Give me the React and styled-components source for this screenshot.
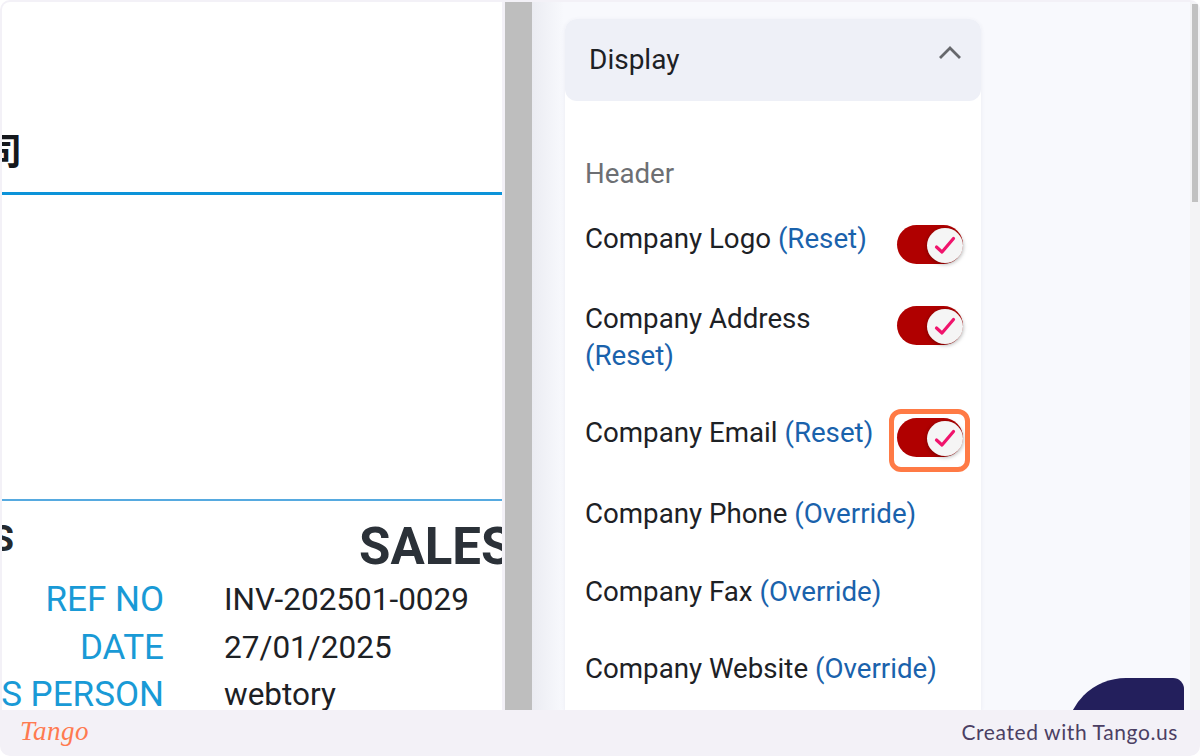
import React from 'react'
import styled, { createGlobalStyle } from 'styled-components'

const Global = createGlobalStyle`
  html, body { margin: 0; padding: 0; background: #fff; }
  body { font-family: Roboto, "Noto Sans", sans-serif; }
`

const Shot = styled.div`
  width: 1200px;
  height: 756px;
  background: #f3f1f7;
  border-radius: 10px;
  overflow: hidden;
  display: flex;
  flex-direction: column;
`

const Viewport = styled.div`
  height: 708px;
  margin: 2px 0 0 2px;
  display: flex;
  overflow: hidden;
  border-radius: 8px 8px 0 0;
`

const DocPane = styled.div`
  width: 500px;
  flex: none;
  background: #fff;
  overflow: hidden;
`

const Doc = styled.div`
  width: 1200px;
  margin-left: -300px;
`

const CompanyName = styled.h1`
  margin: 0;
  height: 190px;
  box-sizing: border-box;
  padding-top: 125px;
  width: 320px;
  text-align: right;
  white-space: nowrap;
  font-family: "Noto Sans CJK SC", sans-serif;
  font-size: 37px;
  line-height: 44px;
  font-weight: 700;
  color: #15181c;
`

const Rule = styled.div`
  width: 800px;
  height: ${p => p.$thick ? 3 : 2}px;
  background: ${p => p.$thick ? '#0c93d9' : '#56aae0'};
  margin-bottom: ${p => p.$space || 0}px;
`

const TitleRow = styled.div`
  height: 75px;
  display: flex;
  align-items: flex-start;
  white-space: nowrap;
`

const Address = styled.div`
  flex: none;
  font-size: 36px;
  line-height: 42px;
  font-weight: 700;
  color: #24292e;
  margin-top: 17px;
  width: 312px;
  text-align: right;
`

const InvoiceTitle = styled.div`
  flex: none;
  font-size: 51px;
  line-height: 60px;
  font-weight: 700;
  color: #2b3138;
  margin: 16px 0 0 345px;
`

const Meta = styled.div`
  display: grid;
  grid-template-columns: 462px auto;
  column-gap: 60px;
  justify-content: start;
`

const MetaLabel = styled.div`
  font-size: 35px;
  line-height: 47.5px;
  color: #199ad6;
  text-align: right;
  white-space: nowrap;
`

const MetaValue = styled.div`
  font-size: 31.5px;
  line-height: 47.5px;
  color: #1d2125;
  white-space: nowrap;
`

const Gutter = styled.div`
  width: 27px;
  flex: none;
  margin-left: 3px;
  background: #bebebe;
`

const SidePane = styled.div`
  flex: 1;
  position: relative;
  display: flex;
  background: linear-gradient(90deg, #ebecf2 0, #f8f9fd 32px);
  padding-left: 33px;
  padding-top: 17px;
`

const Card = styled.div`
  width: 416px;
  background: #fff;
  border-radius: 12px 12px 0 0;
  box-shadow: 0 1px 4px rgba(60, 70, 110, 0.08);
`

const CardHead = styled.div`
  height: 82px;
  box-sizing: border-box;
  padding: 0 18px 2px 24px;
  background: #eef0f7;
  border-radius: 12px;
  display: flex;
  align-items: center;
  justify-content: space-between;
  font-size: 28px;
  color: #1d2125;

  svg {
    margin-bottom: 14px;
  }
`

const CardBody = styled.div`
  padding: 54px 18px 0 20px;
`

const Section = styled.div`
  font-size: 27.7px;
  line-height: 37px;
  color: #6d6f73;
  margin-bottom: 28px;
`

const Row = styled.div`
  display: flex;
  justify-content: space-between;
  align-items: flex-start;
  padding-bottom: ${p => p.$gap}px;
`

const RowLabel = styled.div`
  font-size: 27.7px;
  line-height: 37px;
  color: #1d2125;
`

const Link = styled.span`
  color: #1a62ac;
`

const ToggleWrap = styled.div`
  position: relative;
  flex: none;
  margin-top: ${p => p.$offset}px;
`

const Track = styled.div`
  width: 66px;
  height: 39px;
  border-radius: 20px;
  background: #b00000;
  position: relative;
`

const Thumb = styled.div`
  position: absolute;
  right: 0;
  top: 3px;
  width: 36px;
  height: 35px;
  border-radius: 50%;
  background: #f5f5f5;
  box-shadow: 0 1px 4px rgba(0, 0, 0, 0.35);
  display: flex;
  align-items: center;
  justify-content: center;
`

const Highlight = styled.div`
  position: absolute;
  left: -8px;
  top: -9px;
  width: 81px;
  height: 63px;
  box-sizing: border-box;
  border: 5px solid #ff7a45;
  border-radius: 12px;
`

const Fab = styled.div`
  position: absolute;
  left: 534px;
  top: 676px;
  width: 118px;
  height: 60px;
  background: #231f5c;
  border-radius: 66px 12px 0 0;
`

const ScrollTrack = styled.div`
  position: absolute;
  right: 0;
  top: 0;
  bottom: 0;
  width: 10px;
  background: #f3f3f5;
`

const ScrollThumb = styled.div`
  position: absolute;
  right: 2px;
  top: 2px;
  width: 6px;
  height: 198px;
  background: #c1c1c1;
`

const Footer = styled.div`
  flex: 1;
  display: flex;
  align-items: center;
  justify-content: space-between;
  padding: 0 22px 4px 20px;
`

const TangoMark = styled.div`
  font-family: "Liberation Serif", serif;
  font-style: italic;
  font-size: 27px;
  letter-spacing: 0.5px;
  color: #ff7a50;
`

const Credit = styled.div`
  font-family: Lato, sans-serif;
  font-size: 21px;
  letter-spacing: 0.6px;
  color: #4b3f63;
`

function Toggle({ focused, offset }) {
  return (
    <ToggleWrap $offset={offset}>
      <Track>
        <Thumb>
          <svg width="24" height="24" viewBox="0 0 24 24" fill="none">
            <path d="M3.5 13 L9 18 L20.5 4.5" stroke="#f0146c" strokeWidth="3.2" strokeLinecap="round" strokeLinejoin="round" />
          </svg>
        </Thumb>
      </Track>
      {focused && <Highlight />}
    </ToggleWrap>
  )
}

const rows = [
  { name: 'Company Logo', action: 'Reset', toggle: 5, gap: 36 },
  { name: 'Company Address', action: 'Reset', toggle: 6, gap: 40 },
  { name: 'Company Email', action: 'Reset', toggle: 4, focused: true, gap: 38 },
  { name: 'Company Phone', action: 'Override', gap: 41 },
  { name: 'Company Fax', action: 'Override', gap: 40 },
  { name: 'Company Website', action: 'Override', gap: 40 },
]

export default function App() {
  return (
    <Shot>
      <Global />
      <Viewport>
        <DocPane>
          <Doc>
            <CompanyName>有限公司</CompanyName>
            <Rule $thick $space={304} />
            <Rule />
            <TitleRow>
              <Address>ADDRESS</Address>
              <InvoiceTitle>SALES INVOICE</InvoiceTitle>
            </TitleRow>
            <Meta>
              <MetaLabel>REF NO</MetaLabel>
              <MetaValue>INV-202501-0029</MetaValue>
              <MetaLabel>DATE</MetaLabel>
              <MetaValue>27/01/2025</MetaValue>
              <MetaLabel>SALES PERSON</MetaLabel>
              <MetaValue>webtory</MetaValue>
            </Meta>
          </Doc>
        </DocPane>
        <Gutter />
        <SidePane>
          <Card>
            <CardHead>
              Display
              <svg width="26" height="16" viewBox="0 0 26 16" fill="none">
                <path d="M3 14 L13 4 L23 14" stroke="#66686c" strokeWidth="2.8" />
              </svg>
            </CardHead>
            <CardBody>
              <Section>Header</Section>
              {rows.map(r => (
                <Row key={r.name} $gap={r.gap}>
                  <RowLabel>{r.name} <Link>({r.action})</Link></RowLabel>
                  {r.toggle && <Toggle offset={r.toggle} focused={r.focused} />}
                </Row>
              ))}
            </CardBody>
          </Card>
          <Fab />
          <ScrollTrack />
          <ScrollThumb />
        </SidePane>
      </Viewport>
      <Footer>
        <TangoMark>Tango</TangoMark>
        <Credit>Created with Tango.us</Credit>
      </Footer>
    </Shot>
  )
}
